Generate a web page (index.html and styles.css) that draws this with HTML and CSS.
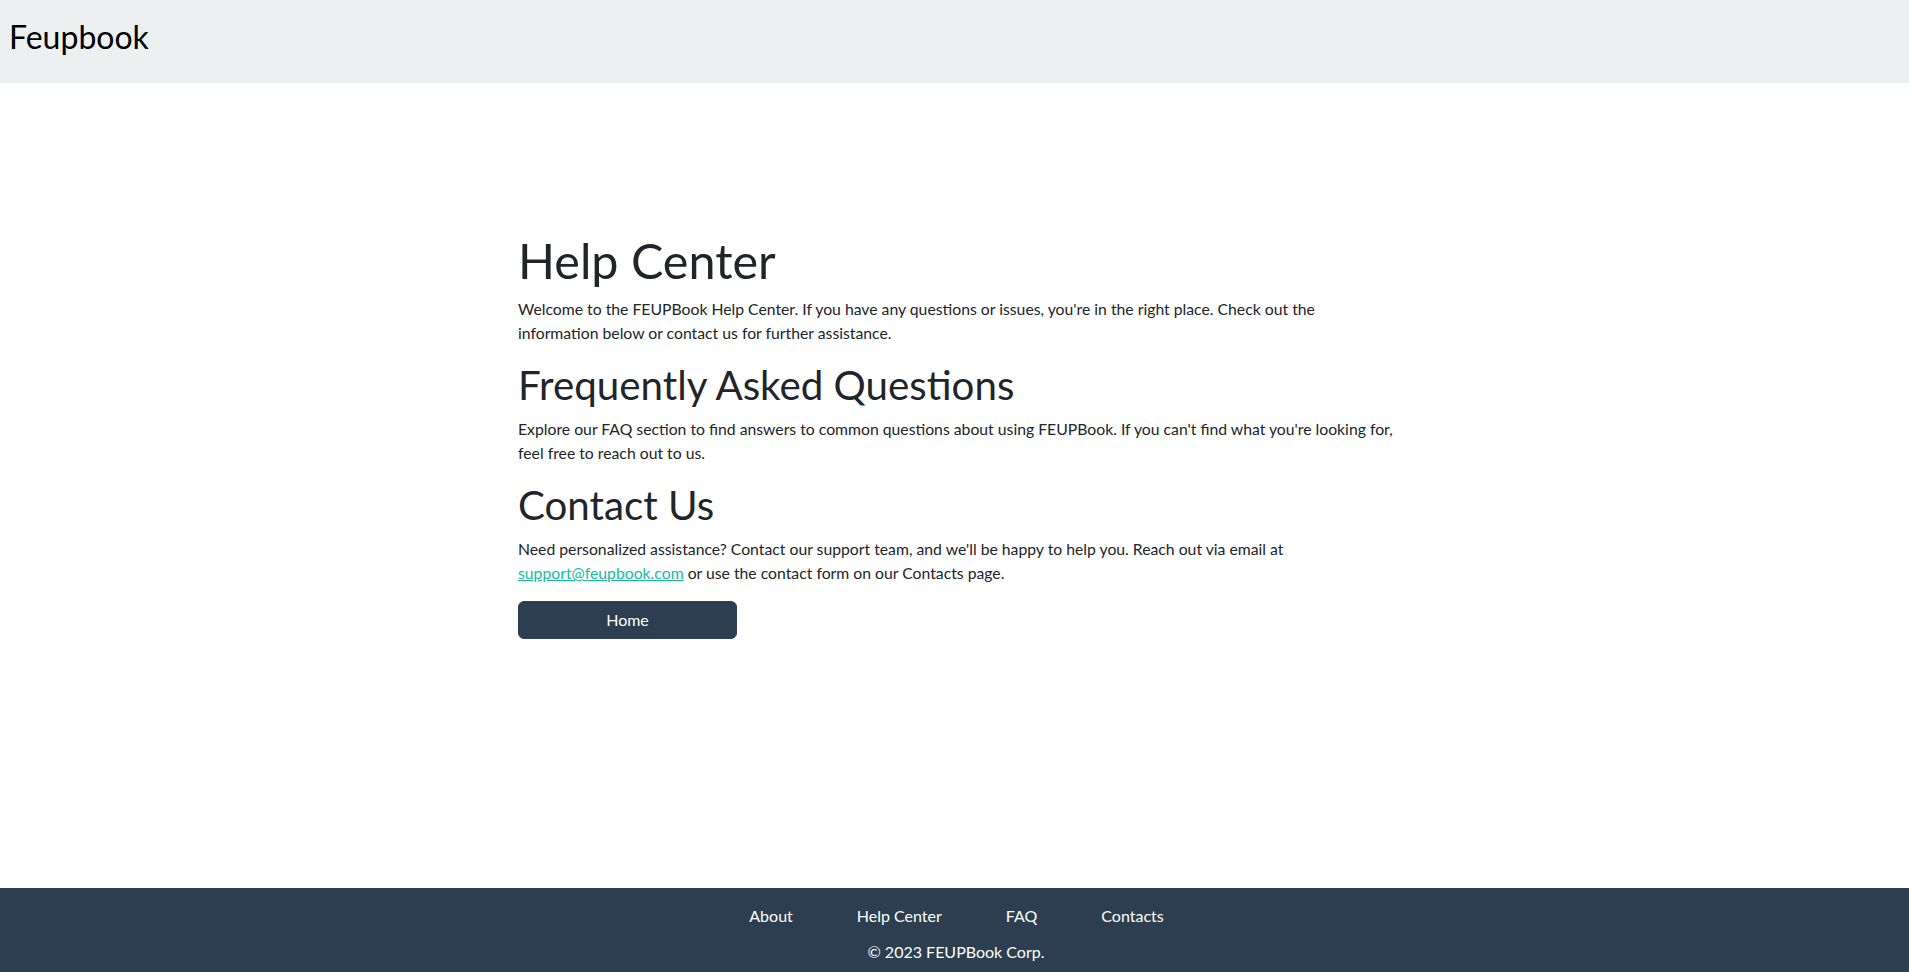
FILE: index.html
```html
<!DOCTYPE html>
<html lang="en">
<head>
<meta charset="utf-8">
<title>Feupbook - Help Center</title>
<link rel="stylesheet" href="styles.css">
</head>
<body>
<header class="topbar">
  <span class="brand">Feupbook</span>
</header>
<main class="main">
  <section class="content">
    <h1 class="title">Help Center</h1>
    <p class="text">Welcome to the FEUPBook Help Center. If you have any questions or issues, you're in the right place. Check out the information below or contact us for further assistance.</p>
    <h2 class="subtitle">Frequently Asked Questions</h2>
    <p class="text">Explore our FAQ section to find answers to common questions about using FEUPBook. If you can't find what you're looking for, feel free to reach out to us.</p>
    <h2 class="subtitle">Contact Us</h2>
    <p class="text">Need personalized assistance? Contact our support team, and we'll be happy to help you. Reach out via email at <a class="link" href="#">support@feupbook.com</a> or use the contact form on our Contacts page.</p>
    <a class="btn" href="#">Home</a>
  </section>
</main>
<footer class="footer">
  <nav class="footer-nav">
    <a class="footer-link" href="#">About</a>
    <a class="footer-link" href="#">Help Center</a>
    <a class="footer-link" href="#">FAQ</a>
    <a class="footer-link" href="#">Contacts</a>
  </nav>
  <p class="copyright">© 2023 FEUPBook Corp.</p>
</footer>
</body>
</html>
```
FILE: styles.css
```css
* { box-sizing: border-box; }
html, body { margin: 0; padding: 0; }
body {
  font-family: Lato, "Open Sans", sans-serif;
  font-size: 16px;
  line-height: 1.5;
  color: #212529;
  background: #fff;
  height: 100vh;
  display: flex;
  flex-direction: column;
  overflow: hidden;
}
.topbar {
  flex: none;
  height: 83px;
  background: #ecf0f1;
  padding: 18px 9px 0;
}
.brand {
  display: block;
  font-size: 32px;
  line-height: 1.2;
  color: #000;
}
.main {
  flex: 1;
  padding-top: 148px;
}
.content {
  width: 877px;
  padding-left: 2px;
  margin: 0 auto;
}
.title {
  margin: 0 0 8px;
  font-size: 48.5px;
  font-weight: 400;
  line-height: 58px;
}
.subtitle {
  margin: 0 0 8px;
  font-size: 40.3px;
  font-weight: 400;
  line-height: 48px;
}
.text {
  margin: 0 0 16px;
  font-size: 15.75px;
  line-height: 24px;
}
.link {
  color: #18bc9c;
  text-decoration: underline;
}
.btn {
  display: block;
  width: 219px;
  padding: 6px 12px;
  border: 1px solid #2c3e50;
  border-radius: 6px;
  background: #2c3e50;
  color: #fff;
  text-align: center;
  text-decoration: none;
  line-height: 24px;
}
.footer {
  flex: none;
  height: 84px;
  background: #2c3e50;
  color: #fff;
  padding-top: 15.5px;
  text-align: center;
}
.footer-nav {
  display: flex;
  justify-content: center;
  gap: 64px;
  padding-left: 4px;
}
.footer-link {
  color: #fff;
  text-decoration: none;
}
.copyright {
  margin: 12px 0 0;
  padding-left: 3px;
}
```
